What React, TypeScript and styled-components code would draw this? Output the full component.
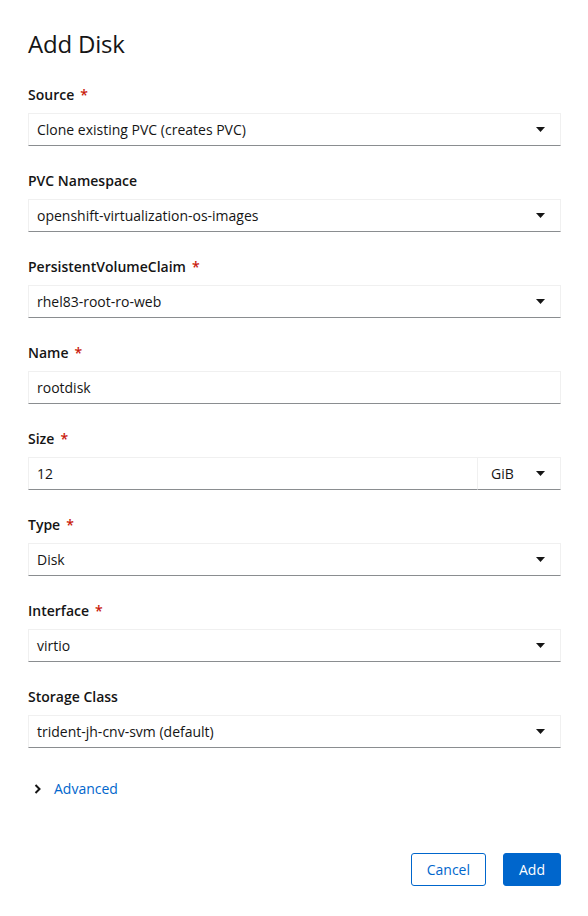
import React from "react";
import styled, { createGlobalStyle } from "styled-components";

const Global = createGlobalStyle`
  html, body { margin: 0; padding: 0; background: #fff; }
  body { font-family: "Open Sans", "Noto Sans", sans-serif; color: #151515; }
  * { box-sizing: border-box; }
`;

const Modal = styled.div`
  width: 588px;
  min-height: 916px;
  padding: 29px 27px 0 28px;
  display: flex;
  flex-direction: column;
`;

const Title = styled.h1`
  margin: 0 0 25px;
  font-size: 24px;
  line-height: 30px;
  font-weight: 400;
  letter-spacing: -0.2px;
`;

const Form = styled.div`
  display: flex;
  flex-direction: column;
  gap: 24px;
`;

const Field = styled.div`
  display: flex;
  flex-direction: column;
`;

const Label = styled.label`
  font-size: 14px;
  line-height: 21px;
  font-weight: 600;
  padding-bottom: 8px;
`;

const Req = styled.span`
  color: #c9190b;
  margin-left: 6px;
`;

const Control = styled.div`
  display: flex;
`;

const Box = styled.div<{ $grow?: boolean; $w?: number }>`
  height: 33px;
  display: flex;
  align-items: center;
  justify-content: space-between;
  padding: 0 15px 0 8px;
  font-size: 14px;
  border: 1px solid #f0f0f0;
  border-bottom-color: #8a8d90;
  ${(p) => (p.$grow ? "flex: 1;" : "")}
  ${(p) => (p.$w ? `width: ${p.$w}px; padding-left: 13px; border-left: none;` : "")}
`;

const Caret = () => (
  <svg width="9" height="5" viewBox="0 0 9 5">
    <path d="M0 0h9L4.5 5z" fill="#151515" />
  </svg>
);

const Advanced = styled.div`
  margin-top: 30px;
  display: flex;
  align-items: center;
  gap: 12px;
  padding-left: 6px;
  font-size: 14px;
  line-height: 21px;
  color: #0066cc;
`;

const Footer = styled.div`
  margin-top: 54px;
  display: flex;
  justify-content: flex-end;
  gap: 17px;
`;

const Button = styled.button<{ $primary?: boolean }>`
  font-family: inherit;
  font-size: 14px;
  height: 33px;
  padding: 0 15px;
  border-radius: 3px;
  border: 1px solid #0066cc;
  background: ${(p) => (p.$primary ? "#0066cc" : "#fff")};
  color: ${(p) => (p.$primary ? "#fff" : "#0066cc")};
`;

const fields: { label: string; value: string; req: boolean }[] = [
  { label: "Source", value: "Clone existing PVC (creates PVC)", req: true },
  { label: "PVC Namespace", value: "openshift-virtualization-os-images", req: false },
  { label: "PersistentVolumeClaim", value: "rhel83-root-ro-web", req: true },
];

const fields2 = [
  { label: "Type", value: "Disk", req: true },
  { label: "Interface", value: "virtio", req: true },
  { label: "Storage Class", value: "trident-jh-cnv-svm (default)", req: false },
];

const SelectField = ({ label, value, req }: { label: string; value: string; req: boolean }) => (
  <Field>
    <Label>
      {label}
      {req && <Req>*</Req>}
    </Label>
    <Control>
      <Box $grow>
        <span>{value}</span>
        <Caret />
      </Box>
    </Control>
  </Field>
);

export default function App() {
  return (
    <>
      <Global />
      <Modal>
        <Title>Add Disk</Title>
        <Form>
          {fields.map((f) => (
            <SelectField key={f.label} {...f} />
          ))}
          <Field>
            <Label>
              Name<Req>*</Req>
            </Label>
            <Control>
              <Box $grow>
                <span>rootdisk</span>
              </Box>
            </Control>
          </Field>
          <Field>
            <Label>
              Size<Req>*</Req>
            </Label>
            <Control>
              <Box $grow>
                <span>12</span>
              </Box>
              <Box $w={83}>
                <span>GiB</span>
                <Caret />
              </Box>
            </Control>
          </Field>
          {fields2.map((f) => (
            <SelectField key={f.label} {...f} />
          ))}
        </Form>
        <Advanced>
          <svg width="8" height="10" viewBox="0 0 8 10">
            <path d="M1.5 1l4 4-4 4" stroke="#151515" strokeWidth="2" fill="none" />
          </svg>
          <span>Advanced</span>
        </Advanced>
        <Footer>
          <Button>Cancel</Button>
          <Button $primary>Add</Button>
        </Footer>
      </Modal>
    </>
  );
}
